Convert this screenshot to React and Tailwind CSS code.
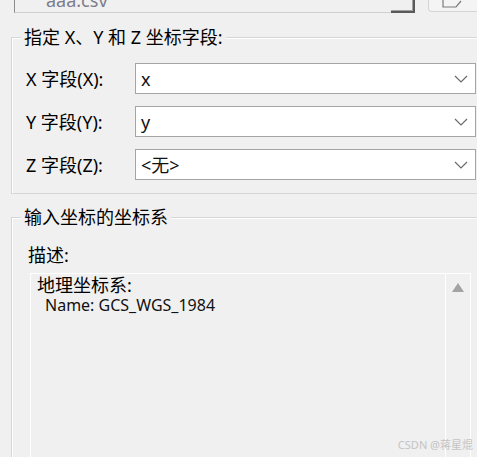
import React from 'react';

const fontStack = '"Noto Sans", "Noto Sans CJK SC", sans-serif';

const Chevron = () => (
  <svg width="14" height="8" viewBox="0 0 14 8" className="shrink-0">
    <polyline points="1,1 7,7 13,1" fill="none" stroke="#6a6a6a" strokeWidth="1.2" />
  </svg>
);

const FieldRow = ({ label, value }) => (
  <div className="flex items-center h-[31px]">
    <div className="w-[109px] text-[18px] leading-[24px] text-black">{label}</div>
    <div className="flex items-center w-[341px] h-[31px] bg-white border border-[#a4a4a4] pl-[5px] pr-[7px]">
      <span className="flex-1 text-[18px] leading-[24px] text-[#111]">{value}</span>
      <Chevron />
    </div>
  </div>
);

const App = () => {
  const fields = [
    { label: 'X 字段(X):', value: 'x' },
    { label: 'Y 字段(Y):', value: 'y' },
    { label: 'Z 字段(Z):', value: '<无>' },
  ];

  return (
    <div
      className="relative w-[477px] h-[457px] bg-[#f0f0f0] overflow-hidden"
      style={{ fontFamily: fontStack }}
    >
      {/* Top file path row (cut off) */}
      <div className="flex items-end h-[13px] overflow-hidden">
        <div className="ml-[14px] w-[388px] h-[13px] border-l border-[#8c8c8c] border-b border-b-[#cfcfcf] overflow-hidden">
          <div className="ml-[31px] -mt-[9px] text-[18px] leading-[18px] text-[#7c7c8c]">aaa.csv</div>
        </div>
        <div className="w-[25px] h-[13px] border-r-2 border-b-2 border-[#5a5a5a] bg-[#f0f0f0] shadow-[inset_-1px_-1px_0_#a0a0a0]" />
        <div className="ml-[13px] w-[50px] h-[12px] mb-[1px] rounded-bl-[4px] border-l border-b border-[#d4d4d4] bg-[#f4f4f4] relative">
          <svg width="20" height="10" viewBox="0 0 20 10" className="absolute left-[13px] top-0">
            <polyline points="1,0 1,7 14,7 19,1" fill="none" stroke="#7a7a7a" strokeWidth="1.2" />
          </svg>
        </div>
      </div>

      {/* Group 1: coordinate fields */}
      <div className="relative mt-[24px] ml-[11px] w-[490px] border border-[#d6d6d6] shadow-[inset_1px_1px_0_#ffffff] pt-[25px] pb-[13px] pl-[14px]">
        <span className="absolute -top-[13px] left-[9px] bg-[#f0f0f0] px-[3px] text-[18px] leading-[24px] text-black">
          指定 X、Y 和 Z 坐标字段:
        </span>
        <div className="flex flex-col gap-[12px]">
          {fields.map((f) => (
            <FieldRow key={f.label} label={f.label} value={f.value} />
          ))}
        </div>
      </div>

      {/* Group 2: coordinate system */}
      <div className="relative mt-[23px] ml-[11px] w-[490px] h-[300px] border border-[#d6d6d6] shadow-[inset_1px_1px_0_#ffffff]">
        <span className="absolute -top-[13px] left-[9px] bg-[#f0f0f0] px-[3px] text-[18px] leading-[24px] text-black">
          输入坐标的坐标系
        </span>
        <div className="pt-[25px] pl-[16px] text-[18px] leading-[24px] text-black">描述:</div>
        <div className="flex mt-[6px] ml-[18px] w-[441px] h-[250px] border-l border-t border-white">
          <div className="flex-1 pt-[1px] pl-[6px]">
            <div className="text-[18px] leading-[21px] text-black">地理坐标系:</div>
            <div className="pl-[8px] text-[16px] leading-[19px] text-[#111]">Name: GCS_WGS_1984</div>
          </div>
          <div className="w-[26px] border-l border-r border-white flex justify-center pt-[9px]">
            <svg width="12" height="9" viewBox="0 0 12 9">
              <polygon points="6,0 12,9 0,9" fill="#a3a3a3" />
            </svg>
          </div>
        </div>
      </div>

      {/* Watermark */}
      <span className="absolute right-[4px] bottom-[5px] text-[11px] leading-[14px] text-[#c4c4c4]">
        CSDN @蒋星焜
      </span>
    </div>
  );
};

export default App;
